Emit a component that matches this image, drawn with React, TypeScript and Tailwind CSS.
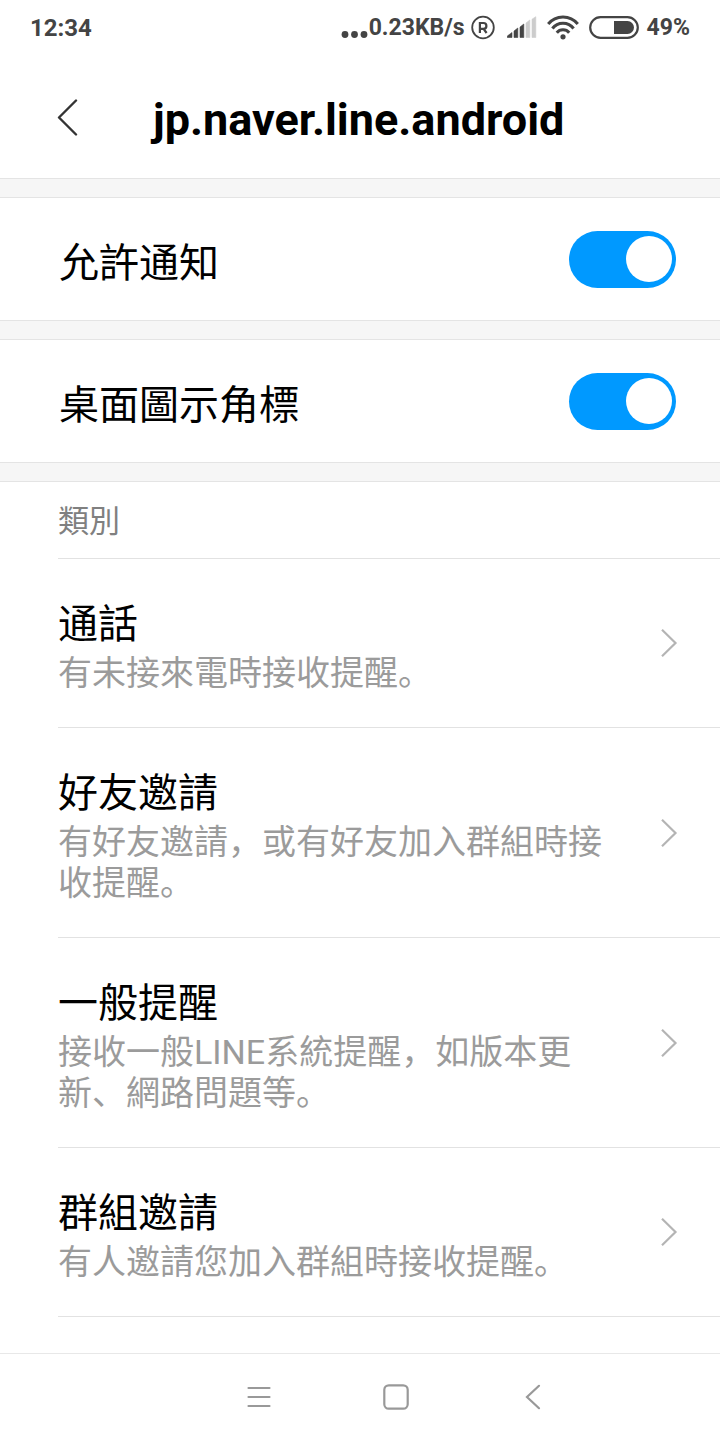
import React, { useState } from 'react';

interface Category {
  title: string;
  description: string;
}

const CATEGORIES: Category[] = [
  { title: '通話', description: '有未接來電時接收提醒。' },
  { title: '好友邀請', description: '有好友邀請，或有好友加入群組時接收提醒。' },
  { title: '一般提醒', description: '接收一般LINE系統提醒，如版本更新、網路問題等。' },
  { title: '群組邀請', description: '有人邀請您加入群組時接收提醒。' },
];

const StatusBar: React.FC = () => (
  <div className="flex h-[55px] items-center justify-between px-[30px] text-[23px] font-bold text-[#444444]">
    <span className="text-2xl">12:34</span>
    <div className="flex items-center">
      <svg width="28" height="24" viewBox="0 0 28 24" fill="currentColor" aria-hidden="true">
        <circle cx="4" cy="18.5" r="3.4" />
        <circle cx="13.5" cy="18.5" r="3.4" />
        <circle cx="23" cy="18.5" r="3.4" />
      </svg>
      <span className="pt-0.5">0.23KB/s</span>
      <svg className="ml-1.5" width="24" height="26" viewBox="0 0 24 26" fill="none" stroke="currentColor" aria-hidden="true">
        <circle cx="12" cy="12.5" r="10.8" strokeWidth="1.8" />
        <path d="M8.9 18V8h3.6a2.8 2.8 0 0 1 0 5.8H8.9M12.6 13.8l3 4.2" strokeWidth="2.2" />
      </svg>
      <svg className="ml-3" width="30" height="24" viewBox="0 0 30 24" fill="currentColor" stroke="currentColor" strokeWidth="0.6" strokeLinejoin="round" aria-hidden="true">
        <path d="M0.3 21.5V20l4.7-3.5v5zM7 15l3.8-3v9.5H7zM13 11l3.8-3v13.5H13z" />
        <path d="M19 7l3.8-3v17.5H19zM25 3.2l3.8-2.5v20.8H25z" fill="#cccccc" stroke="#cccccc" />
      </svg>
      <svg className="ml-2.5" width="32" height="26" viewBox="0 0 32 26" fill="none" stroke="currentColor" strokeWidth="3" aria-hidden="true">
        <path d="M1.2 9a19 19 0 0 1 29.6 0" />
        <path d="M5.4 13.5a13.2 13.2 0 0 1 21.2 0" />
        <path d="M9.8 17.8a8 8 0 0 1 12.4 0" />
        <circle cx="16" cy="21.8" r="2.6" fill="currentColor" stroke="none" />
      </svg>
      <svg className="ml-2.5" width="50" height="24" viewBox="0 0 50 24" fill="none" aria-hidden="true">
        <rect x="1.2" y="1.2" width="47.6" height="20.6" rx="10.3" stroke="currentColor" strokeWidth="2.2" />
        <path d="M25 5h13.5a6.5 6.5 0 0 1 0 13H25z" fill="currentColor" />
      </svg>
      <span className="ml-2 pt-0.5">49%</span>
    </div>
  </div>
);

const Divider: React.FC = () => (
  <div className="h-5 border-y border-[#e4e4e4] bg-[#f6f6f6]" />
);

interface ToggleRowProps {
  id: string;
  label: string;
}

const ToggleRow: React.FC<ToggleRowProps> = ({ id, label }) => {
  const [checked, setChecked] = useState(true);

  return (
    <div className="flex h-[122px] items-center justify-between pl-[59px] pr-11">
      <label htmlFor={id} className="pt-2.5 text-[40px] text-black">
        {label}
      </label>
      <input
        id={id}
        type="checkbox"
        role="switch"
        checked={checked}
        onChange={(e) => setChecked(e.target.checked)}
        className="flex h-[57px] w-[107px] appearance-none items-center rounded-full bg-gray-300 px-1 before:size-[46px] before:rounded-full before:bg-white before:content-[''] checked:justify-end checked:bg-[#0099ff]"
      />
    </div>
  );
};

const CategoryRow: React.FC<Category> = ({ title, description }) => (
  <li className="border-b border-[#e2e2e2]">
    <a href="#" className="flex items-center pr-[42px]">
      <div className="flex-1 pt-[37px] pb-[33px]">
        <div className="text-[40px] leading-[57px] text-black">{title}</div>
        <div className="text-[34px] leading-[41px] text-[#9b9b9b]">{description}</div>
      </div>
      <svg className="ml-13 shrink-0" width="18" height="30" viewBox="0 0 18 30" fill="none" stroke="#b4b4b4" strokeWidth="2.2" aria-hidden="true">
        <path d="M2 1.8L15.5 15 2 28.2" />
      </svg>
    </a>
  </li>
);

const NavBar: React.FC = () => (
  <nav className="flex h-[87px] justify-center border-t border-[#e8e8e8] pl-[71px] text-[#999999]">
    <button type="button" aria-label="選單" className="flex w-[137px] items-center justify-center">
      <svg width="24" height="22" viewBox="0 0 24 22" fill="none" stroke="currentColor" strokeWidth="2.2" strokeLinecap="round">
        <path d="M1.5 2h21M1.5 11h21M1.5 20h21" />
      </svg>
    </button>
    <button type="button" aria-label="主畫面" className="flex w-[137px] items-center justify-center">
      <svg width="26" height="26" viewBox="0 0 26 26" fill="none" stroke="currentColor" strokeWidth="2.2">
        <rect x="1.3" y="1.3" width="23.4" height="23.4" rx="4.5" />
      </svg>
    </button>
    <button type="button" aria-label="返回" className="flex w-[137px] items-center justify-center">
      <svg width="16" height="26" viewBox="0 0 16 26" fill="none" stroke="currentColor" strokeWidth="2.2" strokeLinecap="round">
        <path d="M14 1.8L2 13l12 11.2" />
      </svg>
    </button>
  </nav>
);

export default function App() {
  return (
    <div className="flex min-h-screen flex-col bg-white font-['Roboto','Noto_Sans_CJK_SC',sans-serif]">
      <StatusBar />
      <header className="flex h-[123px] items-center pl-14">
        <button type="button" aria-label="返回" className="mr-[75px]">
          <svg width="22" height="38" viewBox="0 0 22 38" fill="none" stroke="#333333" strokeWidth="2.4" strokeLinecap="round" strokeLinejoin="round">
            <path d="M20 2.5L3 19.5l17 17" />
          </svg>
        </button>
        <h1 className="pt-1.5 text-[45px] font-bold text-black">jp.naver.line.android</h1>
      </header>
      <main className="flex-1">
        <Divider />
        <ToggleRow id="allow" label="允許通知" />
        <Divider />
        <ToggleRow id="badge" label="桌面圖示角標" />
        <Divider />
        <section className="pl-[58px]">
          <h2 className="flex h-[77px] items-center border-b border-[#e2e2e2] pt-1 text-[31px] text-[#808080]">類別</h2>
          <ul>
            {CATEGORIES.map((category) => (
              <CategoryRow key={category.title} {...category} />
            ))}
          </ul>
        </section>
      </main>
      <NavBar />
    </div>
  );
}
